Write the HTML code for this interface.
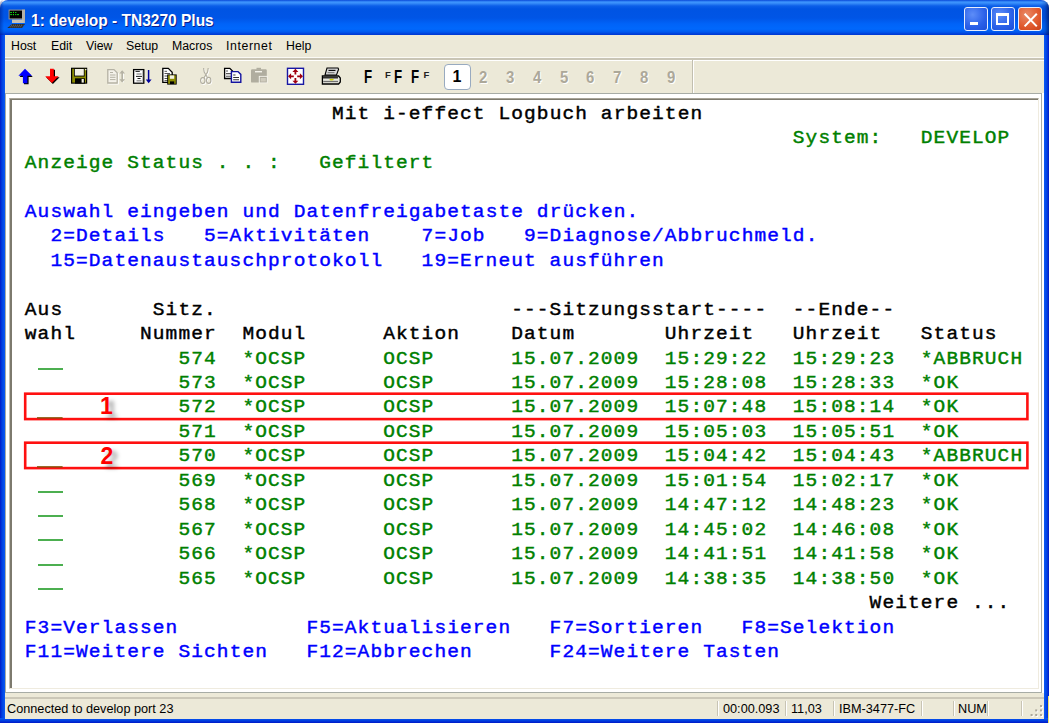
<!DOCTYPE html>
<html><head><meta charset="utf-8">
<style>
html,body{margin:0;padding:0;width:1049px;height:723px;overflow:hidden;background:#ffffff;}
*{box-sizing:border-box;}
.a{position:absolute;}
#title{left:0;top:0;width:1049px;height:35px;border-radius:8px 8px 0 0;
 background:linear-gradient(to bottom,#0a48d8 0px,#3d95ff 2px,#3a8ffa 3px,#0b5ee8 6px,#0054e3 9px,#0055e6 18px,#0063f8 24px,#0068fc 29px,#0058ee 32px,#003ed8 34px,#0038d0 35px);}
#lb{left:0;top:35px;width:5px;height:688px;background:linear-gradient(to right,#0019c8,#0040e0 40%,#0a5af5);}
#rb{left:1044px;top:35px;width:5px;height:688px;background:linear-gradient(to left,#0019c8,#0040e0 40%,#0a5af5);}
#bb{left:0;top:718px;width:1049px;height:5px;background:linear-gradient(to bottom,#0a5af5,#0040e0 50%,#0019c8);}
#menu{left:5px;top:35px;width:1039px;height:22px;background:#ece9d8;font-family:"Liberation Sans",sans-serif;font-size:12.3px;color:#000;}
#menu span{position:absolute;top:4px;}
#sep1{left:5px;top:57px;width:1039px;height:4px;background:linear-gradient(to bottom,#fbfaf5 0,#fbfaf5 1px,#c9c5b5 1px,#c9c5b5 3px,#ffffff 3px);}
#tool{left:5px;top:61px;width:1039px;height:32px;background:#ece9d8;}
#tsep{left:692px;top:60px;width:2px;height:33px;background:linear-gradient(to right,#c2bfaf 0,#c2bfaf 1px,#fff 1px);}
#tline{left:5px;top:93px;width:1037px;height:1px;background:#a7aca6;}
#frame{left:5px;top:94px;width:1037px;height:599px;background:#ffffff;border-left:1px solid #a7aca6;border-right:1px solid #a7aca6;border-bottom:1px solid #a7aca6;}
#sunk{left:9px;top:98px;width:1030px;height:591px;border-top:1px solid #a8a498;border-left:1px solid #c4c0b2;border-right:1px solid #efebdf;border-bottom:1px solid #efebdf;background:#fff;box-shadow:inset 2px 1px 0 #7d7a6e;}
#status{left:5px;top:693px;width:1039px;height:26px;background:#ece9d8;font-family:"Liberation Sans",sans-serif;font-size:12.7px;color:#000;}
#stline{left:5px;top:697px;width:1039px;height:2px;background:#cbc7b8;}
#status span{position:absolute;top:9px;}
.ss{position:absolute;top:9px;width:2px;height:15px;background:linear-gradient(to right,#c8c4b4 0,#c8c4b4 1px,#fff 1px);}
.t{position:absolute;white-space:pre;font-family:"Liberation Mono",monospace;font-weight:normal;-webkit-text-stroke:0.45px currentColor;font-size:19.50px;letter-spacing:1.100px;line-height:24.48px;height:24.48px;transform:scaleY(0.9);transform-origin:0 17.5px;}
.u{position:absolute;height:2px;background:#4caf50;}
.box{position:absolute;border:2px solid #ff1010;}
.lbl{position:absolute;font-family:"Liberation Sans",sans-serif;font-weight:bold;color:#ff0000;font-size:23px;line-height:22px;text-shadow:5px 4px 4px rgba(0,0,0,0.35);}
#ttext{left:31px;top:10.5px;font-family:"Liberation Sans",sans-serif;font-weight:bold;font-size:16.5px;color:#fff;white-space:pre;text-shadow:1px 1px 0 #0a1e8c;transform-origin:0 0;transform:scaleX(0.94);}
.tb{position:absolute;top:7px;width:24px;height:24px;border-radius:3px;border:1px solid #e8eefc;}
.num{position:absolute;top:67.5px;font-family:"Liberation Sans",sans-serif;font-weight:bold;font-size:17px;color:#aca899;text-shadow:1px 1px 0 #fff;transform:scaleX(0.88);transform-origin:0 0;}
.ff{position:absolute;font-family:"Liberation Sans",sans-serif;font-weight:bold;color:#000;}
</style></head><body>
<div id="title" class="a"></div>
<div class="a" style="left:1041px;top:0;width:8px;height:35px;border-top-right-radius:8px;background:linear-gradient(to right,rgba(0,0,60,0) 0,rgba(0,0,60,0.15) 50%,rgba(0,0,60,0.55) 100%);"></div>
<div class="a" style="left:0;top:0;width:4px;height:35px;border-top-left-radius:8px;background:linear-gradient(to right,rgba(0,0,90,0.35),rgba(0,0,90,0));"></div>
<div id="lb" class="a"></div><div id="rb" class="a"></div><div id="bb" class="a"></div>
<!-- title icon -->
<svg class="a" style="left:0;top:0" width="30" height="30" viewBox="0 0 30 30">
 <rect x="8.6" y="9.6" width="16.4" height="9.8" fill="#9c988e"/>
 <rect x="22" y="9.6" width="3" height="13.4" fill="#b4b0a6"/>
 <rect x="9.6" y="10.6" width="12.4" height="7.8" fill="#000"/>
 <g fill="#14e014">
  <rect x="10.2" y="12" width="1.8" height="0.9"/><rect x="13" y="11.8" width="1" height="1.2"/><rect x="15" y="12" width="1.4" height="0.9"/>
  <rect x="10.2" y="14.2" width="2" height="0.9"/><rect x="13" y="14" width="1" height="1.2"/><rect x="15" y="14.2" width="1.2" height="0.9"/><rect x="16.8" y="14.2" width="2.2" height="0.9"/>
 </g>
 <rect x="12" y="19.6" width="11.7" height="3.4" fill="#c4c0b6"/>
 <path d="M12 24 L25 24 L22 28 L7.3 28 Z" fill="#2a2a2a"/>
 <path d="M11 25.2 H23.4 M9.6 26.8 H22.2" stroke="#888" stroke-width="0.7" stroke-dasharray="1.2 0.8"/>
</svg>
<div id="ttext" class="a">1: develop - TN3270 Plus</div>
<div class="tb" style="left:964px;background:radial-gradient(circle at 35% 30%,#5d8df8,#2a60e8 60%,#1c4fd8);"><div class="a" style="left:4.8px;top:14px;width:8px;height:3.4px;background:#fff;"></div></div>
<div class="tb" style="left:991px;background:radial-gradient(circle at 35% 30%,#5d8df8,#2a60e8 60%,#1c4fd8);"><div class="a" style="left:4.4px;top:4.7px;width:12.6px;height:12.7px;border:2px solid #fff;border-top-width:3px;"></div></div>
<div class="tb" style="left:1018px;background:radial-gradient(circle at 35% 30%,#e98a68,#e0582c 60%,#c8401a);"><svg class="a" style="left:4px;top:4px" width="16" height="16"><path d="M1.6 1.7 L13.8 14.4 M13.8 1.7 L1.6 14.4" stroke="#fff" stroke-width="2"/></svg></div>

<div id="menu" class="a">
<span style="left:6px">Host</span><span style="left:46px">Edit</span><span style="left:81px">View</span><span style="left:121px">Setup</span><span style="left:167px">Macros</span><span style="left:221px;letter-spacing:0.6px">Internet</span><span style="left:281px">Help</span>
</div>
<div id="sep1" class="a"></div>
<div id="tool" class="a"></div>
<div id="tsep" class="a"></div>
<div id="tline" class="a"></div>

<svg class="a" style="left:0;top:0" width="700" height="95" viewBox="0 0 700 95" shape-rendering="geometricPrecision">
 <!-- blue up arrow -->
 <path d="M25 70 L32.8 77 L28.6 77 L28.6 84.2 L24 84.2 L24 77 L19.6 77 Z" fill="#000"/>
 <path d="M25 68.8 L32 75.8 L27.4 75.8 L27.4 83.2 L22.9 83.2 L22.9 75.8 L18.4 75.8 Z" fill="#0000ff"/>
 <!-- red down arrow -->
 <path d="M51 69.8 L55 69.8 L55 77.2 L59.6 77.2 L52.9 84 L46 77.2 L51 77.2 Z" fill="#000"/>
 <path d="M50 68.8 L53.8 68.8 L53.8 76.2 L58.6 76.2 L51.9 83 L45.2 76.2 L50 76.2 Z" fill="#ff0000"/>
 <!-- floppy -->
 <rect x="71" y="67.7" width="16.2" height="16" fill="#000"/>
 <rect x="72.2" y="68.8" width="13.8" height="13.8" fill="#8c8c00"/>
 <rect x="74" y="68.5" width="10.6" height="8" fill="#000"/>
 <rect x="74.8" y="69" width="9" height="6.6" fill="#f2f0e4"/>
 <rect x="75" y="78.3" width="10" height="5.4" fill="#000"/>
 <rect x="81.6" y="79" width="2.2" height="3.6" fill="#f0f0e0"/>
 <rect x="85.2" y="69" width="1.2" height="1.2" fill="#fff"/>
 <!-- disabled doc updown -->
 <g transform="translate(1,1)" fill="none" stroke="#ffffff" stroke-width="1.2">
  <path d="M107.8 69.6 L114 69.6 L117.2 72.8 L117.2 83 L107.8 83 Z"/>
  <path d="M122.2 71 L122.2 81.5"/>
 </g>
 <path d="M107.8 69.6 L114 69.6 L117.2 72.8 L117.2 83 L107.8 83 Z" fill="#f4f2ea" stroke="#b5b2a4" stroke-width="1.3"/>
 <path d="M110 72.5 H113 M110 75 H115.5 M110 77.3 H115.5 M110 79.6 H115.5" stroke="#b5b2a4" stroke-width="1"/>
 <path d="M122.2 71 L122.2 81.5" stroke="#b5b2a4" stroke-width="1.6"/>
 <path d="M119.4 73.6 L122.2 70.2 L125 73.6 Z M119.4 79.2 L122.2 82.6 L125 79.2 Z" fill="#b5b2a4"/>
 <!-- doc with down arrow -->
 <rect x="133.6" y="69.6" width="10.2" height="13.6" fill="#fff" stroke="#000" stroke-width="1.3"/>
 <path d="M142.5 70.5 V82.5" stroke="#b0b0b0" stroke-width="0.8"/>
 <path d="M135.5 71.4 H139.8 M136 76.4 H142 M137.5 78.5 H140.5" stroke="#000" stroke-width="0.9"/>
 <path d="M136.5 74 H141.5 M136.5 80.8 H141.5" stroke="#a0a0a0" stroke-width="1.6"/>
 <path d="M148.6 70 V80" stroke="#0000a0" stroke-width="1.5"/>
 <path d="M145.8 79.4 L151.6 79.4 L148.6 83.2 Z" fill="#0000a0"/>
 <!-- doc with floppy -->
 <path d="M162.8 68.4 L168.3 68.4 L172.2 72.3 L172.2 82.4 L162.8 82.4 Z" fill="#fff" stroke="#000" stroke-width="1.3"/>
 <path d="M164.5 71.3 H167 M164.5 73.5 H170 M164.5 76 H170 M164.5 78.5 H170 M164.5 80.6 H170" stroke="#555" stroke-width="1"/>
 <rect x="167.2" y="74.4" width="9.5" height="10.2" fill="#000"/>
 <rect x="168.1" y="75.3" width="7.7" height="8.5" fill="#8c8c00"/>
 <rect x="169.8" y="75.4" width="4.4" height="3.4" fill="#f2f0e4"/>
 <rect x="170" y="81.4" width="4.2" height="2.6" fill="#000"/>
 <!-- cut (disabled) -->
 <g fill="none" stroke="#ffffff" stroke-width="1.1" transform="translate(0.8,0.8)">
  <path d="M203.6 68 L204.2 72 L207.6 77.8 M208.2 68 L207.6 72 L204 77.8"/>
  <ellipse cx="202.8" cy="80.6" rx="2.2" ry="3"/>
  <ellipse cx="208.7" cy="80.4" rx="2.2" ry="3"/>
 </g>
 <g fill="none" stroke="#b0ad9f" stroke-width="1.1">
  <path d="M203.6 68 L204.2 72 L207.6 77.8 M208.2 68 L207.6 72 L204 77.8"/>
  <ellipse cx="202.8" cy="80.6" rx="2.2" ry="3"/>
  <ellipse cx="208.7" cy="80.4" rx="2.2" ry="3"/>
 </g>
 <!-- copy -->
 <path d="M224.6 68.3 L229.8 68.3 L232.5 71 L232.5 78.5 L224.6 78.5 Z" fill="#fff" stroke="#000" stroke-width="1.3"/>
 <path d="M226 71 H228 M226 73.6 H231 M226 76.3 H231" stroke="#555" stroke-width="1.1"/>
 <path d="M231.4 71.6 L238 71.6 L240.8 74.4 L240.8 82.2 L231.4 82.2 Z" fill="#fff" stroke="#1414a0" stroke-width="1.4"/>
 <path d="M233.2 75 H235.5 M233.2 77.5 H239 M233.2 79.7 H239" stroke="#333" stroke-width="1.1"/>
 <!-- paste (disabled) -->
 <rect x="251" y="69.2" width="15.8" height="13.4" rx="1.2" fill="#b0ad9f"/>
 <rect x="256.5" y="67.8" width="4.5" height="2" fill="#b0ad9f"/>
 <rect x="255" y="71" width="7" height="1.4" fill="#f4f2ea"/>
 <rect x="258.8" y="75.9" width="9" height="7.4" fill="#f4f2ea"/>
 <rect x="259.8" y="76.8" width="7" height="5.6" fill="#b0ad9f"/>
 <rect x="260.6" y="78" width="5.2" height="3.6" fill="#cfcbbd"/>
 <!-- full screen -->
 <rect x="287.5" y="68.3" width="16" height="16" fill="#fff" stroke="#1818a4" stroke-width="1.4"/>
 <g fill="#a00010">
  <path d="M295.4 68.8 L298.4 71.9 L296.3 71.9 L296.3 74.6 L294.5 74.6 L294.5 71.9 L292.4 71.9 Z"/>
  <path d="M295.4 83.8 L298.4 80.7 L296.3 80.7 L296.3 78 L294.5 78 L294.5 80.7 L292.4 80.7 Z"/>
  <path d="M288 76.3 L291.1 73.3 L291.1 75.4 L293.8 75.4 L293.8 77.2 L291.1 77.2 L291.1 79.3 Z"/>
  <path d="M303 76.3 L299.9 73.3 L299.9 75.4 L297.2 75.4 L297.2 77.2 L299.9 77.2 L299.9 79.3 Z"/>
 </g>
 <!-- printer -->
 <path d="M327 68 L338 68 L338.6 69.2 L336.5 75 L325 75 Z" fill="#d8d8d8" stroke="#000" stroke-width="1.1"/>
 <path d="M328.5 70.4 H335.5" stroke="#000" stroke-width="1.1"/>
 <path d="M327.5 72.6 H334.5" stroke="#808080" stroke-width="1.2"/>
 <path d="M322.4 76 L338.6 76 L340.3 78 L340.3 82 L338.6 84 L322.4 84 Z" fill="#e8e8e0" stroke="#000" stroke-width="1.3"/>
 <path d="M322.6 77.8 H338" stroke="#000" stroke-width="1.2"/>
 <path d="M323.2 81.5 H338" stroke="#707070" stroke-width="1.3"/>
 <ellipse cx="331.6" cy="79.6" rx="2.2" ry="0.9" fill="#d0d000"/>
</svg>
<div class="ff" style="left:363.5px;top:66.5px;font-size:17.5px;transform:scaleX(0.76);transform-origin:0 0;">F</div>
<div class="ff" style="left:385px;top:69.3px;font-size:9.5px;color:#222;">F</div>
<div class="ff" style="left:393.7px;top:66.5px;font-size:17.5px;transform:scaleX(0.76);transform-origin:0 0;">F</div>
<div class="ff" style="left:411.4px;top:66.5px;font-size:17.5px;transform:scaleX(0.76);transform-origin:0 0;">F</div>
<div class="ff" style="left:423.5px;top:69.3px;font-size:9.5px;color:#222;">F</div>
<div class="a" style="left:444px;top:64px;width:27px;height:26px;border:1px solid #98aac0;border-radius:4px;background:#fff;"></div>
<div class="ff" style="left:452.5px;top:68px;font-size:16px;">1</div>
<div class="num" style="left:479px">2</div>
<div class="num" style="left:506px">3</div>
<div class="num" style="left:533px">4</div>
<div class="num" style="left:559.5px">5</div>
<div class="num" style="left:586px">6</div>
<div class="num" style="left:613px">7</div>
<div class="num" style="left:640px">8</div>
<div class="num" style="left:667px">9</div>


<div id="frame" class="a"></div>
<div id="sunk" class="a"></div>
<div class="t" style="left:332.00px;top:101.70px;color:#000000">Mit i-effect Logbuch arbeiten</div>
<div class="t" style="left:792.80px;top:126.18px;color:#008000">System:</div>
<div class="t" style="left:920.80px;top:126.18px;color:#008000">DEVELOP</div>
<div class="t" style="left:24.80px;top:150.66px;color:#008000">Anzeige Status . . :</div>
<div class="t" style="left:319.20px;top:150.66px;color:#008000">Gefiltert</div>
<div class="t" style="left:24.80px;top:199.62px;color:#0000ff">Auswahl eingeben und Datenfreigabetaste drücken.</div>
<div class="t" style="left:50.40px;top:224.10px;color:#0000ff">2=Details</div>
<div class="t" style="left:204.00px;top:224.10px;color:#0000ff">5=Aktivitäten</div>
<div class="t" style="left:421.60px;top:224.10px;color:#0000ff">7=Job</div>
<div class="t" style="left:524.00px;top:224.10px;color:#0000ff">9=Diagnose/Abbruchmeld.</div>
<div class="t" style="left:50.40px;top:248.58px;color:#0000ff">15=Datenaustauschprotokoll</div>
<div class="t" style="left:421.60px;top:248.58px;color:#0000ff">19=Erneut ausführen</div>
<div class="t" style="left:24.80px;top:297.54px;color:#000000">Aus</div>
<div class="t" style="left:152.80px;top:297.54px;color:#000000">Sitz.</div>
<div class="t" style="left:511.20px;top:297.54px;color:#000000">---Sitzungsstart----</div>
<div class="t" style="left:792.80px;top:297.54px;color:#000000">--Ende--</div>
<div class="t" style="left:24.80px;top:322.02px;color:#000000">wahl</div>
<div class="t" style="left:140.00px;top:322.02px;color:#000000">Nummer</div>
<div class="t" style="left:242.40px;top:322.02px;color:#000000">Modul</div>
<div class="t" style="left:383.20px;top:322.02px;color:#000000">Aktion</div>
<div class="t" style="left:511.20px;top:322.02px;color:#000000">Datum</div>
<div class="t" style="left:664.80px;top:322.02px;color:#000000">Uhrzeit</div>
<div class="t" style="left:792.80px;top:322.02px;color:#000000">Uhrzeit</div>
<div class="t" style="left:920.80px;top:322.02px;color:#000000">Status</div>
<div class="t" style="left:178.40px;top:346.50px;color:#008000">574</div>
<div class="t" style="left:242.40px;top:346.50px;color:#008000">*OCSP</div>
<div class="t" style="left:383.20px;top:346.50px;color:#008000">OCSP</div>
<div class="t" style="left:511.20px;top:346.50px;color:#008000">15.07.2009</div>
<div class="t" style="left:664.80px;top:346.50px;color:#008000">15:29:22</div>
<div class="t" style="left:792.80px;top:346.50px;color:#008000">15:29:23</div>
<div class="t" style="left:920.80px;top:346.50px;color:#008000">*ABBRUCH</div>
<div class="t" style="left:178.40px;top:370.98px;color:#008000">573</div>
<div class="t" style="left:242.40px;top:370.98px;color:#008000">*OCSP</div>
<div class="t" style="left:383.20px;top:370.98px;color:#008000">OCSP</div>
<div class="t" style="left:511.20px;top:370.98px;color:#008000">15.07.2009</div>
<div class="t" style="left:664.80px;top:370.98px;color:#008000">15:28:08</div>
<div class="t" style="left:792.80px;top:370.98px;color:#008000">15:28:33</div>
<div class="t" style="left:920.80px;top:370.98px;color:#008000">*OK</div>
<div class="t" style="left:178.40px;top:395.46px;color:#008000">572</div>
<div class="t" style="left:242.40px;top:395.46px;color:#008000">*OCSP</div>
<div class="t" style="left:383.20px;top:395.46px;color:#008000">OCSP</div>
<div class="t" style="left:511.20px;top:395.46px;color:#008000">15.07.2009</div>
<div class="t" style="left:664.80px;top:395.46px;color:#008000">15:07:48</div>
<div class="t" style="left:792.80px;top:395.46px;color:#008000">15:08:14</div>
<div class="t" style="left:920.80px;top:395.46px;color:#008000">*OK</div>
<div class="t" style="left:178.40px;top:419.94px;color:#008000">571</div>
<div class="t" style="left:242.40px;top:419.94px;color:#008000">*OCSP</div>
<div class="t" style="left:383.20px;top:419.94px;color:#008000">OCSP</div>
<div class="t" style="left:511.20px;top:419.94px;color:#008000">15.07.2009</div>
<div class="t" style="left:664.80px;top:419.94px;color:#008000">15:05:03</div>
<div class="t" style="left:792.80px;top:419.94px;color:#008000">15:05:51</div>
<div class="t" style="left:920.80px;top:419.94px;color:#008000">*OK</div>
<div class="t" style="left:178.40px;top:444.42px;color:#008000">570</div>
<div class="t" style="left:242.40px;top:444.42px;color:#008000">*OCSP</div>
<div class="t" style="left:383.20px;top:444.42px;color:#008000">OCSP</div>
<div class="t" style="left:511.20px;top:444.42px;color:#008000">15.07.2009</div>
<div class="t" style="left:664.80px;top:444.42px;color:#008000">15:04:42</div>
<div class="t" style="left:792.80px;top:444.42px;color:#008000">15:04:43</div>
<div class="t" style="left:920.80px;top:444.42px;color:#008000">*ABBRUCH</div>
<div class="t" style="left:178.40px;top:468.90px;color:#008000">569</div>
<div class="t" style="left:242.40px;top:468.90px;color:#008000">*OCSP</div>
<div class="t" style="left:383.20px;top:468.90px;color:#008000">OCSP</div>
<div class="t" style="left:511.20px;top:468.90px;color:#008000">15.07.2009</div>
<div class="t" style="left:664.80px;top:468.90px;color:#008000">15:01:54</div>
<div class="t" style="left:792.80px;top:468.90px;color:#008000">15:02:17</div>
<div class="t" style="left:920.80px;top:468.90px;color:#008000">*OK</div>
<div class="t" style="left:178.40px;top:493.38px;color:#008000">568</div>
<div class="t" style="left:242.40px;top:493.38px;color:#008000">*OCSP</div>
<div class="t" style="left:383.20px;top:493.38px;color:#008000">OCSP</div>
<div class="t" style="left:511.20px;top:493.38px;color:#008000">15.07.2009</div>
<div class="t" style="left:664.80px;top:493.38px;color:#008000">14:47:12</div>
<div class="t" style="left:792.80px;top:493.38px;color:#008000">14:48:23</div>
<div class="t" style="left:920.80px;top:493.38px;color:#008000">*OK</div>
<div class="t" style="left:178.40px;top:517.86px;color:#008000">567</div>
<div class="t" style="left:242.40px;top:517.86px;color:#008000">*OCSP</div>
<div class="t" style="left:383.20px;top:517.86px;color:#008000">OCSP</div>
<div class="t" style="left:511.20px;top:517.86px;color:#008000">15.07.2009</div>
<div class="t" style="left:664.80px;top:517.86px;color:#008000">14:45:02</div>
<div class="t" style="left:792.80px;top:517.86px;color:#008000">14:46:08</div>
<div class="t" style="left:920.80px;top:517.86px;color:#008000">*OK</div>
<div class="t" style="left:178.40px;top:542.34px;color:#008000">566</div>
<div class="t" style="left:242.40px;top:542.34px;color:#008000">*OCSP</div>
<div class="t" style="left:383.20px;top:542.34px;color:#008000">OCSP</div>
<div class="t" style="left:511.20px;top:542.34px;color:#008000">15.07.2009</div>
<div class="t" style="left:664.80px;top:542.34px;color:#008000">14:41:51</div>
<div class="t" style="left:792.80px;top:542.34px;color:#008000">14:41:58</div>
<div class="t" style="left:920.80px;top:542.34px;color:#008000">*OK</div>
<div class="t" style="left:178.40px;top:566.82px;color:#008000">565</div>
<div class="t" style="left:242.40px;top:566.82px;color:#008000">*OCSP</div>
<div class="t" style="left:383.20px;top:566.82px;color:#008000">OCSP</div>
<div class="t" style="left:511.20px;top:566.82px;color:#008000">15.07.2009</div>
<div class="t" style="left:664.80px;top:566.82px;color:#008000">14:38:35</div>
<div class="t" style="left:792.80px;top:566.82px;color:#008000">14:38:50</div>
<div class="t" style="left:920.80px;top:566.82px;color:#008000">*OK</div>
<div class="t" style="left:869.60px;top:591.30px;color:#000000">Weitere ...</div>
<div class="t" style="left:24.80px;top:615.78px;color:#0000ff">F3=Verlassen</div>
<div class="t" style="left:306.40px;top:615.78px;color:#0000ff">F5=Aktualisieren</div>
<div class="t" style="left:549.60px;top:615.78px;color:#0000ff">F7=Sortieren</div>
<div class="t" style="left:741.60px;top:615.78px;color:#0000ff">F8=Selektion</div>
<div class="t" style="left:24.80px;top:640.26px;color:#0000ff">F11=Weitere Sichten</div>
<div class="t" style="left:306.40px;top:640.26px;color:#0000ff">F12=Abbrechen</div>
<div class="t" style="left:549.60px;top:640.26px;color:#0000ff">F24=Weitere Tasten</div>
<div class="u" style="left:37.60px;top:368.10px;width:25.60px"></div>
<div class="u" style="left:37.60px;top:490.50px;width:25.60px"></div>
<div class="u" style="left:37.60px;top:514.98px;width:25.60px"></div>
<div class="u" style="left:37.60px;top:539.46px;width:25.60px"></div>
<div class="u" style="left:37.60px;top:563.94px;width:25.60px"></div>
<div class="u" style="left:37.60px;top:588.42px;width:25.60px"></div>
<svg class="a" style="left:0;top:0" width="1049" height="723" viewBox="0 0 1049 723">
 <rect x="25.2" y="393.7" width="1002.2" height="25.4" fill="none" stroke="#ff1010" stroke-width="2.6"/>
 <rect x="25.2" y="442.7" width="1002.2" height="25.4" fill="none" stroke="#ff1010" stroke-width="2.6"/>
 <rect x="37" y="417" width="25.6" height="1" fill="#9a6a28"/>
 <rect x="37" y="418" width="25.6" height="1" fill="#b83010"/>
 <rect x="37" y="466" width="25.6" height="1" fill="#9a6a28"/>
 <rect x="37" y="467" width="25.6" height="1" fill="#b83010"/>
</svg>
<div class="lbl" style="left:100px;top:395px;">1</div>
<div class="lbl" style="left:100.5px;top:444.5px;">2</div>


<div id="status" class="a"></div>
<div id="stline" class="a"></div>
<div class="a" style="left:0;top:692px;width:1049px;height:26px;font-family:'Liberation Sans',sans-serif;font-size:12.7px;">
<span class="a" style="left:7px;top:10px">Connected to develop port 23</span>
<div class="ss" style="left:717px"></div>
<span class="a" style="left:723px;top:10px">00:00.093</span>
<div class="ss" style="left:785px"></div>
<span class="a" style="left:791px;top:10px">11,03</span>
<div class="ss" style="left:833px"></div>
<span class="a" style="left:839px;top:10px">IBM-3477-FC</span>
<div class="ss" style="left:921px"></div>
<div class="ss" style="left:953px"></div>
<span class="a" style="left:958px;top:10px">NUM</span>
<div class="ss" style="left:987px"></div>
<div class="ss" style="left:1021px"></div>
</div>
<svg class="a" style="left:1025px;top:700px" width="20" height="18" viewBox="1025 700 20 18">
 <g fill="#ffffff"><rect x="1041" y="706" width="2" height="2"/><rect x="1036.2" y="710.4" width="2" height="2"/><rect x="1041" y="710.4" width="2" height="2"/><rect x="1031.6" y="715" width="2" height="2"/><rect x="1036.2" y="715" width="2" height="2"/><rect x="1041" y="715" width="2" height="2"/></g>
 <g fill="#aca899"><rect x="1040" y="705" width="2" height="2"/><rect x="1035.2" y="709.4" width="2" height="2"/><rect x="1040" y="709.4" width="2" height="2"/><rect x="1030.6" y="714" width="2" height="2"/><rect x="1035.2" y="714" width="2" height="2"/><rect x="1040" y="714" width="2" height="2"/></g>
</svg>
<div class="a" style="left:1048px;top:696px;width:1px;height:27px;background:#f0e070;"></div>
</body></html>
